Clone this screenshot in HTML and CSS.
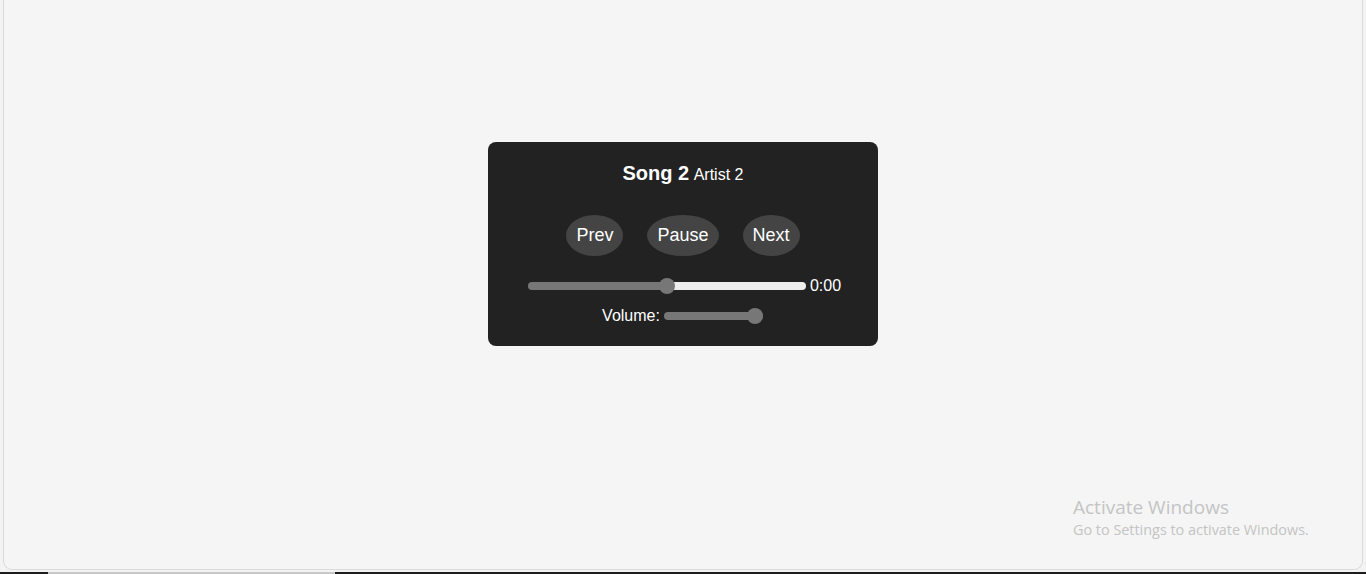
FILE: index.html
```html
<!DOCTYPE html>
<html lang="en">
<head>
<meta charset="utf-8">
<title>Music Player</title>
<link rel="stylesheet" href="styles.css">
</head>
<body>
<div class="frame">
  <div class="player">
    <div class="title"><span class="song">Song 2</span> <span class="artist">Artist 2</span></div>
    <div class="controls">
      <button class="btn">Prev</button>
      <button class="btn">Pause</button>
      <button class="btn">Next</button>
    </div>
    <div class="row progress-row">
      <input class="range progress" type="range" min="0" max="100" value="50">
      <span class="time">0:00</span>
    </div>
    <div class="row volume-row">
      <span class="label">Volume:</span>
      <input class="range volume" type="range" min="0" max="100" value="100">
    </div>
  </div>
  <div class="watermark">
    <div class="wm-title">Activate Windows</div>
    <div class="wm-sub">Go to Settings to activate Windows.</div>
  </div>
</div>
<div class="taskbar">
  <div class="tb-dark tb-left"></div>
  <div class="tb-gray"></div>
  <div class="tb-dark tb-rest"></div>
</div>
</body>
</html>
```
FILE: styles.css
```css
* { box-sizing: border-box; }
html, body { margin: 0; padding: 0; }
body {
  background: #f3f3f3;
  font-family: "Liberation Sans", Arial, sans-serif;
  height: 574px;
  overflow: hidden;
}
.frame {
  position: relative;
  margin: 0 3px;
  height: 570px;
  background: #f5f5f5;
  border: 1px solid #dadada;
  border-top: none;
  border-radius: 0 0 9px 9px;
  display: flex;
  flex-direction: column;
  align-items: center;
  padding-top: 142px;
}
.player {
  width: 390px;
  background: #222222;
  border-radius: 8px;
  padding: 20px;
  color: #fff;
  display: flex;
  flex-direction: column;
  align-items: center;
}
.title {
  height: 23px;
  line-height: 23px;
  text-align: center;
}
.song { font-size: 20px; font-weight: bold; }
.artist { font-size: 16px; }
.controls {
  margin-top: 30px;
  display: flex;
  gap: 24px;
}
.btn {
  font-family: "Liberation Sans", Arial, sans-serif;
  font-size: 18px;
  line-height: 21px;
  color: #fff;
  background: #444;
  border: none;
  border-radius: 50%;
  padding: 10px;
  margin: 0;
}
.row {
  display: flex;
  align-items: center;
  justify-content: center;
  gap: 4px;
  height: 20px;
  font-size: 16px;
}
.progress-row { margin-top: 20px; padding-left: 3px; }
.volume-row { margin-top: 10px; padding-right: 1px; }
.range {
  -webkit-appearance: none;
  appearance: none;
  height: 8px;
  border-radius: 4px;
  margin: 0;
  outline: none;
}
.progress {
  width: 278px;
  background: linear-gradient(to right, #777 0 50%, #eeeeee 50% 100%);
}
.volume {
  width: 99px;
  background: #777;
}
.range::-webkit-slider-thumb {
  -webkit-appearance: none;
  appearance: none;
  width: 16px;
  height: 16px;
  border-radius: 50%;
  background: #777;
  border: none;
}
.time, .label { color: #fff; }
.watermark {
  position: absolute;
  left: 1069px;
  top: 494px;
  color: #c4c4c4;
  font-family: "Open Sans", "Noto Sans", sans-serif;
}
.wm-title { font-size: 19px; line-height: 26px; }
.wm-sub { font-size: 14.4px; line-height: 20px; }
.taskbar {
  margin-top: 2px;
  height: 2px;
  display: flex;
}
.tb-dark { background: #1c1c1c; }
.tb-left { width: 48px; }
.tb-gray { width: 287px; background: #c8c8c8; }
.tb-rest { flex: 1; }
```
